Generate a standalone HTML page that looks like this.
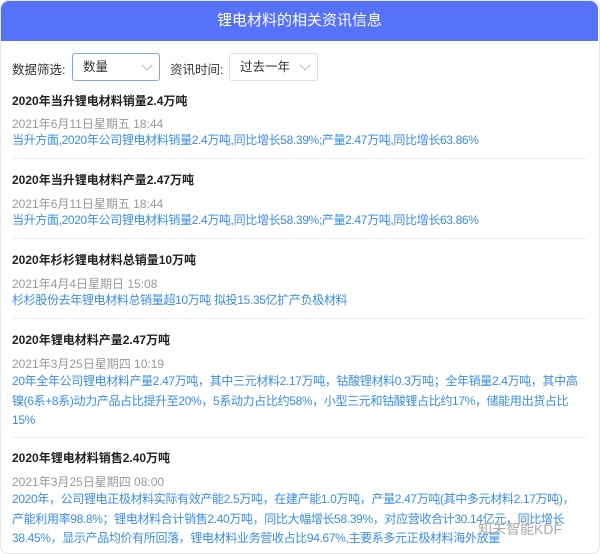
<!DOCTYPE html>
<html><head><meta charset="utf-8"><style>
*{margin:0;padding:0;box-sizing:border-box}
body{width:600px;height:554px;overflow:hidden;background:#fff;font-family:"Liberation Sans","Noto Sans CJK SC",sans-serif;font-size:12px;position:relative}
.hd{position:absolute;left:1px;top:1px;width:597px;height:40px;background:#5673f8;border-radius:8px 8px 0 0;color:#fff;font-size:15px;text-align:center;line-height:40px}
.frame{position:absolute;left:0;top:0;width:600px;height:554px;border:1px solid #e6e6e6;border-radius:8px}
.lbl{position:absolute;top:59px;color:#333;font-size:12.5px}
.sel{position:absolute;top:53px;height:28px;border:1px solid #dcdfe6;border-radius:3px;font-size:12.5px;color:#333;padding-left:10px;line-height:26px}
.sel i{position:absolute;right:8px;top:7px;width:8px;height:8px;border-right:1px solid #bbb;border-bottom:1px solid #bbb;transform:rotate(45deg)}
.t{position:absolute;left:12px;color:#222;font-weight:bold;font-size:12px}
.d{position:absolute;left:12px;color:#999;font-size:12px}
.c{position:absolute;left:12px;width:586px;color:#3a8ee6;font-size:12px;line-height:19.5px;letter-spacing:-0.35px}
.sep{position:absolute;left:12px;width:575px;height:1px;background:#eee}
</style></head><body>
<div class="frame"></div>
<div class="hd">锂电材料的相关资讯信息</div>
<div class="lbl" style="left:12px">数据筛选:</div>
<div class="sel" style="left:72px;width:88px;border-color:#7ba4f0">数量<i></i></div>
<div class="lbl" style="left:170px">资讯时间:</div>
<div class="sel" style="left:229px;width:89px">过去一年<i></i></div>

<div class="t" style="top:92px">2020年当升锂电材料销量2.4万吨</div>
<div class="d" style="top:115px">2021年6月11日星期五 18:44</div>
<div class="c" style="top:131px">当升方面,2020年公司锂电材料销量2.4万吨,同比增长58.39%;产量2.47万吨,同比增长63.86%</div>
<div class="sep" style="top:158px"></div>

<div class="t" style="top:171px">2020年当升锂电材料产量2.47万吨</div>
<div class="d" style="top:195px">2021年6月11日星期五 18:44</div>
<div class="c" style="top:211px">当升方面,2020年公司锂电材料销量2.4万吨,同比增长58.39%;产量2.47万吨,同比增长63.86%</div>
<div class="sep" style="top:238px"></div>

<div class="t" style="top:251px">2020年杉杉锂电材料总销量10万吨</div>
<div class="d" style="top:275px">2021年4月4日星期日 15:08</div>
<div class="c" style="top:291px">杉杉股份去年锂电材料总销量超10万吨 拟投15.35亿扩产负极材料</div>
<div class="sep" style="top:318px"></div>

<div class="t" style="top:331px">2020年锂电材料产量2.47万吨</div>
<div class="d" style="top:355px">2021年3月25日星期四 10:19</div>
<div class="c" style="top:372px">20年全年公司锂电材料产量2.47万吨，其中三元材料2.17万吨，钴酸锂材料0.3万吨；全年销量2.4万吨，其中高<br>镍(6系+8系)动力产品占比提升至20%，5系动力占比约58%，小型三元和钴酸锂占比约17%，储能用出货占比<br>15%</div>
<div class="sep" style="top:437px"></div>

<div class="t" style="top:449px">2020年锂电材料销售2.40万吨</div>
<div class="d" style="top:473px">2021年3月25日星期四 08:00</div>
<div class="c" style="top:490px">2020年，公司锂电正极材料实际有效产能2.5万吨，在建产能1.0万吨，产量2.47万吨(其中多元材料2.17万吨)，<br>产能利用率98.8%；锂电材料合计销售2.40万吨，同比大幅增长58.39%，对应营收合计30.14亿元，同比增长<br>38.45%，显示产品均价有所回落，锂电材料业务营收占比94.67%,主要系多元正极材料海外放量</div>
<div style="position:absolute;left:478px;top:519px;color:#aaa;font-size:14px">知未智能KDF</div>
</body></html>
